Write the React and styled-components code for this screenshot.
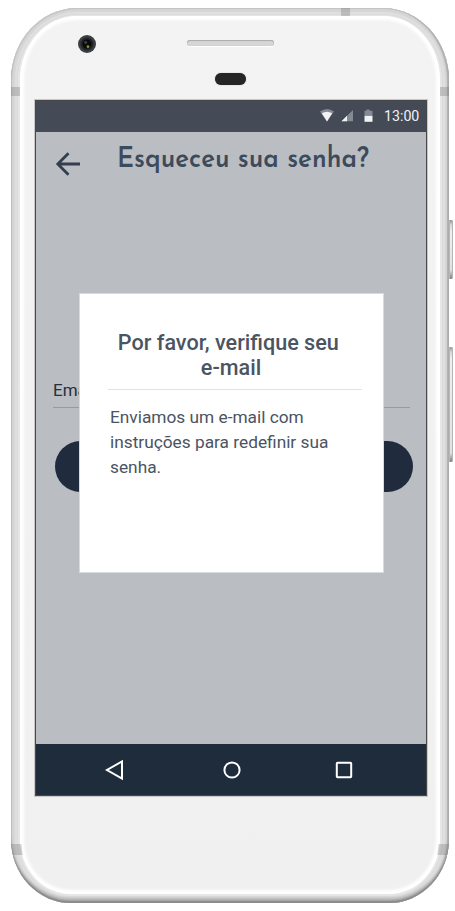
import React from "react";
import styled, { createGlobalStyle } from "styled-components";

const GlobalStyle = createGlobalStyle`
  * { box-sizing: border-box; }
  body { margin: 0; background: #fff; font-family: Roboto, sans-serif; overflow: hidden; }
  h1, h2, p { margin: 0; }
`;

const Stage = styled.main`
  position: relative;
  width: 455px;
  height: 911px;
  padding: 8px 0 0 11px;
  background: #fff;
`;

const Phone = styled.div`
  position: relative;
  width: 438px;
  height: 895px;
  padding: 8px 9px 9px 9px;
  border-radius: 66px 66px 60px 60px / 72px 72px 64px 64px;
  background: #e6e6e6;
  box-shadow:
    inset 0 -2px 1px #8b8b8b,
    inset 1px 1px 1px #c4c4c4,
    inset -2px 0 1px #b0b0b0,
    inset 0 -4px 2px #a9a9a9,
    inset 0 0 1px 4px #d6d6d6,
    inset 0 -6px 1px #cecece,
    inset 0 0 1px 6px #e0e0e0,
    inset 0 0 0 7px #dadada;
`;

const Face = styled.div`
  width: 420px;
  height: 878px;
  display: flex;
  flex-direction: column;
  padding: 0 12px 0 15px;
  border-radius: 57px 57px 51px 51px / 64px 64px 55px 55px;
  background: linear-gradient(#f3f3f3, #f2f2f2 35%, #f0f0f0);
  box-shadow: inset 0 0 3px 4px #fff;
`;

const Forehead = styled.div`
  position: relative;
  height: 84px;
  flex: none;
  display: flex;
  flex-direction: column;
  align-items: center;
  padding-top: 24px;
  gap: 27px;
`;

const Speaker = styled.div`
  width: 87px;
  height: 6px;
  margin-right: 3px;
  border-radius: 4px;
  background: #d6d6d6;
  box-shadow: inset 0 1px 1px #aaa, inset 0 0 1px #aaa, 0 1px #fff;
`;

const Sensor = styled.div`
  width: 31px;
  height: 12px;
  margin-right: 3px;
  border-radius: 6px;
  background: #252525;
  box-shadow: 0 0 1px #777;
`;

const Camera = styled.svg`
  position: absolute;
  left: 42px;
  top: 18px;
`;

const Antenna = styled.i`
  position: absolute;
  left: ${(p) => p.$x}px;
  top: ${(p) => p.$y}px;
  width: ${(p) => p.$w}px;
  height: ${(p) => p.$h}px;
  background: rgba(110, 110, 110, 0.3);
  transform: skewX(${(p) => p.$skew || 0}deg);
`;

const SideKey = styled.i`
  position: absolute;
  left: 449px;
  top: ${(p) => p.$top}px;
  width: 4px;
  height: ${(p) => p.$height}px;
  border-radius: 0 2px 2px 0;
  background: linear-gradient(#8c8c8c, #d8d8d8 5px, #f0f0f0 12px, #e1e1e1 calc(100% - 9px), #777);
  box-shadow: inset -1px 0 #b5b5b5, inset 1px 0 #b8b8b8;
`;

const Screen = styled.section`
  position: relative;
  width: 392px;
  height: 696px;
  flex: none;
  display: flex;
  flex-direction: column;
  border: 1px solid #484848;
  background: #babdc2;
  box-shadow: 0 0 0 1px #c9c7c5;
`;

const StatusBar = styled.header`
  height: 31px;
  flex: none;
  display: flex;
  align-items: center;
  padding: 0 0 1px 284px;
  background: #444a56;
  color: #f1f2f3;
`;

const Clock = styled.time`
  margin-left: 9px;
  font-size: 14.2px;
  line-height: 18px;
`;

const View = styled.div`
  flex: 1;
`;

const TitleBar = styled.div`
  height: 64px;
  display: flex;
  align-items: center;
  padding-left: 19px;
  gap: 35px;
`;

const Title = styled.h1`
  margin-top: -8px;
  color: #3d4a5b;
  font: 600 28.6px/34px "Josefin Sans", Lato, sans-serif;
  white-space: nowrap;
  transform: scaleX(0.907);
  transform-origin: left;
`;

const EmailField = styled.div`
  width: 357px;
  height: 31px;
  margin: 181px 0 0 17px;
  padding-top: 2px;
  border-bottom: 1px solid #929baa;
  color: #242f40;
  font-size: 17px;
  line-height: 22px;
`;

const Submit = styled.div`
  width: 358px;
  height: 51px;
  margin: 33px 0 0 19px;
  border-radius: 26px;
  background: #202c3e;
`;

const Dialog = styled.section`
  position: absolute;
  left: 43px;
  top: 192px;
  width: 305px;
  height: 280px;
  padding: 36px 21px 0 28px;
  border: 1px solid #d8dade;
  background: #fff;
  color: #4a5462;
`;

const DialogTitle = styled.h2`
  height: 60px;
  padding-right: 8px;
  border-bottom: 1px solid #dee2ea;
  text-align: center;
  font-size: 21.6px;
  font-weight: 500;
  line-height: 25px;
  white-space: nowrap;
`;

const DialogText = styled.p`
  padding: 15px 0 0 2px;
  font-size: 17.3px;
  line-height: 25px;
`;

const NavBar = styled.nav`
  height: 51px;
  flex: none;
  display: grid;
  grid-template-columns: 117px 112px 22px;
  align-items: center;
  padding: 1px 0 0 68px;
  background: #1f2c3c;
`;

const NavIcon = styled.svg`
  display: block;
  width: 22px;
  height: 22px;
  fill: none;
  stroke: #fff;
  stroke-width: 2;
`;

export default function App() {
  return (
    <>
      <GlobalStyle />
      <Stage>
        <SideKey $top={220} $height={59} />
        <SideKey $top={347} $height={115} />
        <Phone>
          <Antenna $x={0} $y={79} $w={9} $h={9} />
          <Antenna $x={429} $y={79} $w={9} $h={9} />
          <Antenna $x={330} $y={0} $w={9} $h={8} />
          <Antenna $x={1} $y={836} $w={10} $h={11} $skew={7} />
          <Antenna $x={427} $y={836} $w={10} $h={11} $skew={-7} />
          <Face>
            <Forehead>
              <Camera width="20" height="20" viewBox="0 0 20 20">
                <circle cx="10" cy="10" r="9" fill="#3b3e40" />
                <circle cx="10" cy="10" r="6.5" fill="#222426" />
                <circle cx="10" cy="10" r="4.5" fill="#090a0c" />
                <circle cx="8.7" cy="8.5" r="1.4" fill="#3d4148" />
                <circle cx="11" cy="12.7" r="1.4" fill="#89903a" />
              </Camera>
              <Speaker />
              <Sensor />
            </Forehead>
            <Screen>
              <StatusBar>
                <svg width="55" height="16" viewBox="0 0 55 16">
                  <path d="M0 3.5Q7-1.5 14 3.5L7 13.5Z" fill="#858b94" />
                  <path d="M1.8 5.2Q7 2.2 12.2 5.2L7 13.5Z" fill="#f1f2f3" />
                  <path d="M21.5 13.2L33 2v11.2Z" fill="#858b94" />
                  <path d="M21.5 13.2l5.5-5.4v5.4Z" fill="#f1f2f3" />
                  <path d="M44.5 3.5V2.8h2V1.5h3v1.3h3v5h-8Z" fill="#858b94" />
                  <path d="M44.5 7.8h8v6h-8Z" fill="#f1f2f3" />
                </svg>
                <Clock>13:00</Clock>
              </StatusBar>
              <View>
                <TitleBar>
                  <svg width="27" height="26" viewBox="0 0 27 26" fill="none" stroke="#323e4f" strokeWidth="2.8">
                    <path d="M25 13H3M13.5 2.2L2.8 13l10.7 10.8" />
                  </svg>
                  <Title>Esqueceu sua senha?</Title>
                </TitleBar>
                <EmailField>Email</EmailField>
                <Submit />
              </View>
              <NavBar>
                <NavIcon viewBox="0 0 22 22"><path d="M18 2.5v17L3 11Z" /></NavIcon>
                <NavIcon viewBox="0 0 22 22"><circle cx="11" cy="11" r="7.6" /></NavIcon>
                <NavIcon viewBox="0 0 22 22"><rect x="3.8" y="3.8" width="14.4" height="14.4" rx=".7" /></NavIcon>
              </NavBar>
              <Dialog>
                <DialogTitle>Por favor, verifique seu&nbsp;<br />e-mail</DialogTitle>
                <DialogText>Enviamos um e-mail com instruções para redefinir sua senha.</DialogText>
              </Dialog>
            </Screen>
          </Face>
        </Phone>
      </Stage>
    </>
  );
}
